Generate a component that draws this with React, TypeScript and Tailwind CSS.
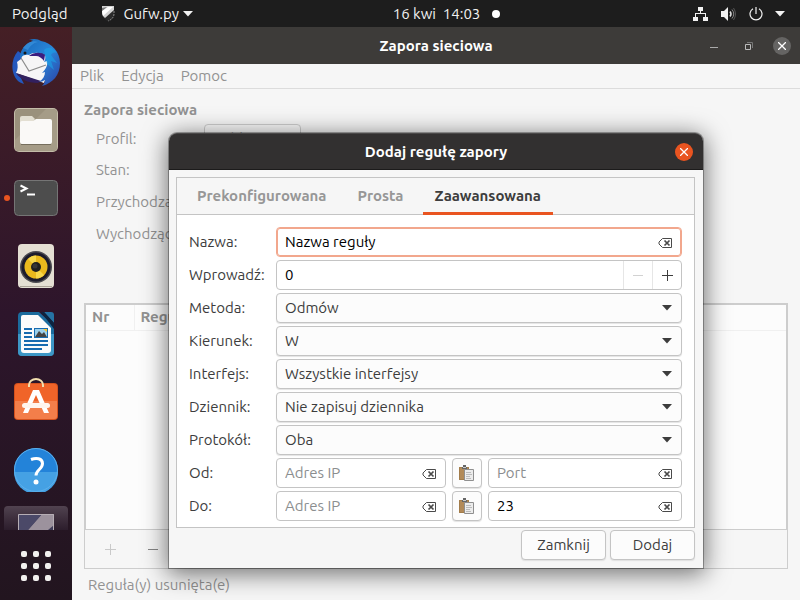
import React, { useState } from "react";

const caret = "M0 0h10l-5 5.5z";

function Caret({ className }: { className: string }) {
  return (
    <svg viewBox="0 0 10 6" className={className} fill="currentColor" aria-hidden="true">
      <path d={caret} />
    </svg>
  );
}

function ShieldIcon() {
  return (
    <svg viewBox="0 0 14 16" className="h-4 w-3.5" aria-hidden="true">
      <path d="M1 1h12v7c0 3-2 5.500-6 7-4-1.500-6-4-6-7z" fill="#2b2b2b" />
      <path d="M1 0h12v4L4 12C2 10 1 9 1 7z" fill="#d4d4d4" />
      <path d="M1 5 7 1h5L2 10z" fill="#fff" />
      <path d="m1 2 5-1-5 4z" fill="#777" />
      <path d="M13 5v3c0 3-2 5.500-6 7" fill="none" stroke="#8a8a8a" strokeWidth="1" strokeDasharray="2 1" />
    </svg>
  );
}

function TopBar() {
  return (
    <header className="flex h-[27px] shrink-0 items-center justify-between bg-[#1d1d1d] text-[#f2f2f2]">
      <div className="flex flex-1 items-center pl-3">
        <button>Podgląd</button>
        <button className="ml-8.5 flex items-center">
          <ShieldIcon />
          <span className="ml-2">Gufw.py</span>
          <Caret className="ml-1 h-1.5 w-2.5" />
        </button>
      </div>
      <button className="ml-24 flex items-center">
        <span>16 kwi&nbsp; 14:03</span>
        <span className="ml-3 size-2 rounded-full bg-white" />
      </button>
      <div className="flex flex-1 justify-end pr-[15px]">
        <button className="flex items-center gap-3" aria-label="Menu systemowe">
          <svg viewBox="0 0 16 14" className="h-3.5 w-4" fill="#f2f2f2">
            <path d="M5 0h5v4H8v2h5v4h2v4h-5v-4h2V7H3v3h2v4H0v-4h2V6h5V4H5z" />
          </svg>
          <svg viewBox="0 0 16 14" className="h-3.5 w-4" fill="none">
            <path d="M0 4h3l4-4v14l-4-4H0z" fill="#f2f2f2" />
            <path d="M9 4.500q2 2.500 0 5" stroke="#ddd" strokeWidth="1.500" />
            <path d="M11 2.500q3.500 4.500 0 9" stroke="#888" />
            <path d="M12.500 1q4 6 0 12" stroke="#555" />
          </svg>
          <svg viewBox="0 0 14 14" className="size-3.5" fill="none" stroke="#f2f2f2" strokeWidth="1.200">
            <path d="M4 1.700a6 6 0 1 0 6 0M7 0v7" />
          </svg>
          <Caret className="h-1.5 w-2.5" />
        </button>
      </div>
    </header>
  );
}

function ThunderbirdIcon() {
  return (
    <svg viewBox="0 0 48 48" className="size-12" aria-hidden="true">
      <defs>
        <linearGradient id="tb" x1="0" y1="0" x2="1" y2="1">
          <stop offset="0" stopColor="#1667b8" />
          <stop offset=".5" stopColor="#2a86d9" />
          <stop offset="1" stopColor="#2b3fa4" />
        </linearGradient>
      </defs>
      <path d="M6 13C-2 22-1 36 6 43c1 1 3 2 6 3l-3-6-3-6 5-17z" fill="#2458bd" />
      <path d="M4 35c2-4 2-7 1-11l4-3 2-5 14-2 13 5-2 8 1 4-5 14z" fill="#f6f5f6" />
      <path d="M9 20 17 33l17-6" fill="none" stroke="#8c8c8c" strokeWidth="1.200" />
      <path d="m4 35 25 8-3 2C15 45 8 41 4 35z" fill="#32205f" />
      <path d="M8 20c0-9 6-15 13-17-1-1-2-1-4-1 5-2 9-1 12 1 11 2 19 11 19 22 0 12-7 20-18 23 2-2 3-4 3-6-2 1-4 2-6 2 4-3 6-6 6-10l-3 1c4-4 6-8 5-12l-3 1c1-2 2-4 1-7-5-3-12-3-16 0-3-1-6 0-9 3z" fill="url(#tb)" />
      <path d="M32 12c4-4 10-2 13 3-3-1-5 0-6 2l6 8-6-2 3 9-7-6" fill="#1ba1e8" opacity=".6" />
      <path d="M17 18c5-4 12-4 16-1l-1 6c-2-3-5-5-8-5z" fill="#3a1d80" />
      <circle cx="13" cy="15" r="1.500" fill="#17191c" />
      <path d="M11 10c4-5 9-8 15-6-5 1-8 4-10 8" fill="#3b93dd" opacity=".7" />
    </svg>
  );
}

function FilesIcon() {
  return (
    <svg viewBox="0 0 44 44" className="size-11" aria-hidden="true">
      <rect width="44" height="44" rx="5" fill="#c4bda9" />
      <rect x="1" y="1" width="42" height="42" rx="4" fill="#9a917c" />
      <path d="M1 32 32 1h7a4 4 0 0 1 4 4v34a4 4 0 0 1-4 4H5a4 4 0 0 1-4-4z" fill="#a59c87" />
      <path d="M6 10q0-2 2-2h10l3 3-3 4H6z" fill="#e3dfd2" />
      <path d="M6 15q0-2 2-2h11l3-2h14q2 0 2 2v21q0 2-2 2H8q-2 0-2-2z" fill="#faf9f7" />
      <path d="M7 36.500h30" stroke="#756e5d" />
    </svg>
  );
}

function TerminalIcon() {
  return (
    <svg viewBox="0 0 44 36" className="h-9 w-11" aria-hidden="true">
      <rect x=".5" y=".5" width="43" height="35" rx="4" fill="#4d4d4d" stroke="#757575" />
      <path d="m6.500 5.500 6 3-6 3" fill="none" stroke="#fff" strokeWidth="2" />
      <path d="M13 14.500h8" stroke="#fff" strokeWidth="2" />
    </svg>
  );
}

function SpeakerIcon() {
  return (
    <svg viewBox="0 0 36 44" className="h-11 w-9" aria-hidden="true">
      <rect width="36" height="44" rx="4" fill="#e4dfd3" />
      <path d="M2 42.500h32" stroke="#aaa497" />
      <circle cx="18" cy="23" r="16" fill="#4b4a50" />
      <circle cx="18" cy="23" r="14.500" fill="#1c1b2b" />
      <circle cx="18" cy="23" r="11.500" fill="#eab91d" />
      <path d="M18 23 10 15a11.500 11.500 0 0 1 8-3.500zM18 23l8 8a11.500 11.500 0 0 1-8 3.500z" fill="#f7d84a" />
      <circle cx="18" cy="23" r="5" fill="#20201f" />
      <circle cx="17" cy="22" r="2.500" fill="#373737" />
    </svg>
  );
}

function WriterIcon() {
  return (
    <svg viewBox="0 0 36 44" className="h-11 w-9" aria-hidden="true">
      <path d="M4 0h17l15 14v26q0 4-4 4H4q-4 0-4-4V4q0-4 4-4z" fill="#1b6b9d" />
      <path d="M0 22h36v18q0 4-4 4H4q-4 0-4-4z" fill="#3d97c6" />
      <path d="M26 0h7q3 0 3 3v8z" fill="#2673a4" />
      <path d="M23 0h3l10 11v6z" fill="#0d2440" />
      <path d="M5 3h15l13 13v22q0 3-3 3H6q-3 0-3-3V5q0-2 2-2z" fill="#fbfbfb" />
      <path d="M6 17h8M6 21h8M6 25h8M6 29h24M6 33h24M6 37h18" stroke="#176bb0" strokeWidth="2" />
      <path d="M16 16h14v10H16z" fill="#176bb0" />
      <path d="M17 17h12v8H17z" fill="#9bd0ec" />
      <path d="m17 25 4-6 3 3 2-2 3 5z" fill="#444" />
      <path d="M25 17h4v3z" fill="#f6c52e" />
    </svg>
  );
}

function SoftwareIcon() {
  return (
    <svg viewBox="0 0 44 42" className="mb-1.5 h-[42px] w-11" aria-hidden="true">
      <rect y="5" width="44" height="37" rx="4" fill="#d4511d" />
      <rect x="1" y="6" width="42" height="35" rx="3" fill="#f06429" />
      <path d="M1 23h42v15q0 3-3 3H4q-3 0-3-3z" fill="#f37e4a" />
      <path d="M15 9V7a7 6 0 0 1 14 0v2" fill="none" stroke="#f1dfae" strokeWidth="2" />
      <path d="M19 12h6l10 23h-5l-8-18-8 18H9z" fill="#fff" />
      <rect x="8" y="25" width="28" height="5" rx="2.500" fill="#fff5ee" />
    </svg>
  );
}

function HelpIcon() {
  return (
    <svg viewBox="0 0 44 44" className="size-11" aria-hidden="true">
      <circle cx="22" cy="22" r="22" fill="#2383d9" />
      <path d="M0 24h44a22 22 0 0 1-44 0z" fill="#45a1e4" />
      <circle cx="22" cy="22" r="21.500" fill="none" stroke="#5cb0ec" />
      <path d="M17 11.500c5-2 11.500-1.500 11.500 4 0 6-6.500 6-6.500 12" fill="none" stroke="#fff" strokeWidth="3" />
      <circle cx="22" cy="34" r="2.500" fill="#fff" />
    </svg>
  );
}

const dockApps = [
  { name: "Thunderbird", icon: <ThunderbirdIcon />, running: false },
  { name: "Pliki", icon: <FilesIcon />, running: false },
  { name: "Terminal", icon: <TerminalIcon />, running: true },
  { name: "Rhythmbox", icon: <SpeakerIcon />, running: false },
  { name: "LibreOffice Writer", icon: <WriterIcon />, running: false },
  { name: "Ubuntu Software", icon: <SoftwareIcon />, running: false },
  { name: "Pomoc", icon: <HelpIcon />, running: false },
];

function Dock() {
  return (
    <nav className="flex w-[72px] shrink-0 flex-col overflow-hidden bg-linear-to-b from-[#451f25] via-[#2d152b] via-50% to-[#22151f] pt-px">
      {dockApps.map((app) => (
        <button key={app.name} aria-label={app.name} className="relative flex h-[68px] shrink-0 items-center justify-center">
          {app.running && <span className="absolute left-1 size-1.5 rounded-full bg-[#e95420]" />}
          {app.icon}
        </button>
      ))}
      <button aria-label="Zapora sieciowa" className="mx-1 mt-0.5 flex h-6 shrink-0 items-end justify-center overflow-hidden rounded-t bg-linear-to-b from-[#514350] to-[#2c1d2c]">
        <svg viewBox="0 0 36 16" className="h-4 w-9">
          <path d="M0 0h36v16H0z" fill="#403c58" />
          <path d="M24 0h12v11l-6 5H10z" fill="#9c929d" />
          <path d="M0 0h24L10 16H0z" fill="#4b4968" />
          <path d="M.5 16V.5h35V16" fill="none" stroke="#b6aeb5" />
        </svg>
      </button>
      <button aria-label="Wyświetl programy" className="mt-auto mb-[19px] grid shrink-0 grid-cols-3 gap-1.5 self-center">
        {Array.from({ length: 9 }, (_, i) => (
          <span key={i} className="size-1.5 rounded-xs bg-[#f2f0ef]" />
        ))}
      </button>
    </nav>
  );
}

function CloseIcon() {
  return (
    <svg viewBox="0 0 8 8" className="size-2" fill="none" stroke="#fff" strokeWidth="1.300">
      <path d="m0 0 8 8M8 0 0 8" />
    </svg>
  );
}

function FirewallWindow() {
  return (
    <section className="flex flex-1 flex-col bg-[#f6f6f6] text-[#929292]">
      <div className="flex h-[37px] shrink-0 items-center bg-[#3d3b39] px-[9px]">
        <div className="flex-1" />
        <h1 className="font-bold text-white">Zapora sieciowa</h1>
        <div className="flex flex-1 items-center justify-end gap-5">
          <button aria-label="Minimalizuj" className="mt-1 mr-1.5 h-px w-2 bg-[#aaa]" />
          <button aria-label="Przywróć">
            <svg viewBox="0 0 9 9" className="size-[9px]" fill="none">
              <path d="M1.500 3.500h5v5h-5z" stroke="#bbb" />
              <path d="M3 1.500h5.500V7" stroke="#777" />
            </svg>
          </button>
          <button aria-label="Zamknij okno" className="flex size-[18px] items-center justify-center rounded-full bg-[#656463]">
            <CloseIcon />
          </button>
        </div>
      </div>
      <nav className="flex h-[25px] shrink-0 items-center gap-[17px] border-b border-[#dcdcdc] px-2">
        <button>Plik</button>
        <button>Edycja</button>
        <button>Pomoc</button>
      </nav>
      <main className="flex flex-1 flex-col px-3 pt-[11px]">
        <h2 className="font-bold">Zapora sieciowa</h2>
        <div className="mt-1 grid grid-cols-[96px_97px] items-center gap-x-3 pl-3">
          <label htmlFor="profile">Profil:</label>
          <select id="profile" className="h-[30px] appearance-none rounded border border-[#cdcdcd] bg-[#fafafa] px-2">
            <option>Publiczny</option>
          </select>
          <span className="col-span-2 flex h-8 items-center">Stan:</span>
          <span className="col-span-2 flex h-8 items-center">Przychodzące:</span>
          <span className="col-span-2 flex h-8 items-center">Wychodzące:</span>
        </div>
        <div className="mt-[53px] flex flex-1 flex-col border border-[#cdcdcd]">
          <div className="flex-1 border border-[#cdcdcd] bg-[#fcfcfc]">
            <table className="w-full table-fixed text-left">
              <thead>
                <tr className="h-[25px] border-b border-[#f0f0f0]">
                  <th className="w-12 border-r border-[#f0f0f0] pl-1.5">Nr</th>
                  <th className="w-[280px] pl-1.5">Reguła</th>
                  <th className="pl-1.5">Nazwa</th>
                </tr>
              </thead>
            </table>
          </div>
          <div className="flex h-[38px] shrink-0 items-center gap-8 pl-5">
            <button aria-label="Dodaj regułę" className="text-[#c9c9c9]">
              <PlusIcon />
            </button>
            <button aria-label="Usuń regułę" className="h-px w-2.5 bg-[#858585]" />
          </div>
        </div>
        <p className="flex h-[31px] shrink-0 items-center pl-1">Reguła(y) usunięta(e)</p>
      </main>
    </section>
  );
}

function PlusIcon() {
  return (
    <svg viewBox="0 0 11 11" className="size-[11px]" stroke="currentColor">
      <path d="M0 5.500h11M5.500 0v11" />
    </svg>
  );
}

const fieldBox = "flex h-[30px] min-w-0 items-center rounded border bg-white";

function ClearField({ id, label, placeholder, initial = "", focused = false, className = "" }: {
  id: string; label?: string; placeholder?: string; initial?: string; focused?: boolean; className?: string;
}) {
  const [value, setValue] = useState(initial);
  return (
    <div className={`${fieldBox} ${focused ? "border-[#f2a78d] ring-1 ring-[#f2a78d] ring-inset" : "border-[#c4c4c4]"} ${className}`}>
      <input
        id={id}
        aria-label={label}
        placeholder={placeholder}
        value={value}
        onChange={(e) => setValue(e.target.value)}
        className="w-0 min-w-0 flex-1 bg-transparent pl-2 text-black outline-none placeholder:text-[#8b8e8f]"
      />
      <button type="button" aria-label="Wyczyść" onClick={() => setValue("")} className="mt-0.5 mr-[9px]">
        <svg viewBox="0 0 14 10" className="h-2.5 w-3.5" fill="none">
          <path d="M4.500 .5h9v9h-9L1 6V4z" stroke="#4a4a4a" />
          <path d="m6.500 2.500 5 5M11.500 2.500l-5 5" stroke="#4a4a4a" strokeWidth="1.700" />
        </svg>
      </button>
    </div>
  );
}

function SelectRow({ id, label, value }: { id: string; label: string; value: string }) {
  return (
    <>
      <label htmlFor={id}>{label}</label>
      <div className="relative flex items-center">
        <select id={id} className="h-[30px] w-full appearance-none rounded border border-[#c4c4c4] bg-[#fcfcfc] px-2 shadow-[0_1px_1px_#e4e4e4]">
          <option>{value}</option>
        </select>
        <Caret className="pointer-events-none absolute right-2.5 h-1.5 w-2.5" />
      </div>
    </>
  );
}

function PasteButton() {
  return (
    <button type="button" aria-label="Wklej bieżący adres IP" className="flex h-[30px] w-[30px] shrink-0 items-center justify-center rounded border border-[#c4c4c4] bg-[#fcfcfc] shadow-[0_1px_1px_#e4e4e4]">
      <svg viewBox="0 0 16 17" className="h-[17px] w-4">
        <path d="M0 2h10v13H0z" fill="#b28a58" />
        <path d="M.5 2.500h9v12h-9z" fill="none" stroke="#a27c4a" />
        <path d="M3 4V2h1V0h3v2h1v2z" fill="#666" />
        <path d="M4 2h3v1H4z" fill="#ccc" />
        <path d="M5.500 4.500h9v11h-9z" fill="#ececec" stroke="#8f8f8f" />
        <path d="M7 7.500h5M7 9.500h6M7 11.500h4M7 13.500h5" stroke="#bbb" />
      </svg>
    </button>
  );
}

function AddressRow({ id, label, port = "" }: { id: string; label: string; port?: string }) {
  return (
    <>
      <label htmlFor={id}>{label}</label>
      <div className="flex gap-1.5">
        <ClearField id={id} placeholder="Adres IP" className="w-[170px]" />
        <PasteButton />
        <ClearField id={`${id}-port`} label={`${label} port`} placeholder="Port" initial={port} className="flex-1" />
      </div>
    </>
  );
}

const actionButton =
  "h-[30px] w-[85px] rounded border border-[#c4c4c4] bg-[#fcfcfc] shadow-[0_1px_1px_#e0e0e0]";

function RuleDialog() {
  return (
    <div role="dialog" aria-labelledby="dialog-title" className="flex w-[534px] flex-col rounded-t-lg bg-[#f6f6f6] text-[#3d3d3d] shadow-[0_0_0_1px_rgba(0,0,0,0.3),0_4px_24px_2px_rgba(0,0,0,0.55)]">
      <div className="flex h-[37px] items-center rounded-t-lg border-t border-b border-t-[#4a4848] border-b-[#1c1b1b] bg-[#323030] px-2.5">
        <div className="flex-1" />
        <h2 id="dialog-title" className="font-bold text-white">Dodaj regułę zapory</h2>
        <div className="flex flex-1 justify-end">
          <button aria-label="Zamknij okno dialogowe" className="flex size-[18px] items-center justify-center rounded-full bg-[#e95420]">
            <CloseIcon />
          </button>
        </div>
      </div>
      <div className="mt-[7px] mr-2 ml-[7px] border border-[#c4c4c4] bg-white">
        <div role="tablist" className="flex h-[37px] gap-[7px] border-b border-[#c4c4c4] bg-[#f6f6f6] pl-2 font-bold text-[#979797]">
          <button role="tab" className="px-3">Prekonfigurowana</button>
          <button role="tab" className="px-3">Prosta</button>
          <button role="tab" aria-selected="true" className="-mb-px border-b-3 border-[#e95420] px-3 pt-0.5 text-[#3d3d3d]">
            Zaawansowana
          </button>
        </div>
        <form className="grid grid-cols-[84px_1fr] items-center gap-x-[3px] gap-y-[3px] px-3 pt-3 pb-1.5" onSubmit={(e) => e.preventDefault()}>
          <label htmlFor="name">Nazwa:</label>
          <ClearField id="name" initial="Nazwa reguły" focused />
          <label htmlFor="insert">Wprowadź:</label>
          <div className={`${fieldBox} border-[#c4c4c4]`}>
            <input id="insert" defaultValue="0" className="w-0 min-w-0 flex-1 bg-transparent pl-2 text-black outline-none" />
            <button type="button" aria-label="Zmniejsz" className="flex h-7 w-[29px] items-center justify-center border-l border-[#e6e6e6]">
              <span className="h-px w-2.5 bg-[#d2d2d2]" />
            </button>
            <button type="button" aria-label="Zwiększ" className="flex h-7 w-[29px] items-center justify-center border-l border-[#e6e6e6]">
              <PlusIcon />
            </button>
          </div>
          <SelectRow id="policy" label="Metoda:" value="Odmów" />
          <SelectRow id="direction" label="Kierunek:" value="W" />
          <SelectRow id="interface" label="Interfejs:" value="Wszystkie interfejsy" />
          <SelectRow id="log" label="Dziennik:" value="Nie zapisuj dziennika" />
          <SelectRow id="protocol" label="Protokół:" value="Oba" />
          <AddressRow id="from" label="Od:" />
          <AddressRow id="to" label="Do:" port="23" />
        </form>
      </div>
      <div className="flex justify-end gap-1 pt-0.5 pr-2 pb-2">
        <button className={actionButton}>Zamknij</button>
        <button className={actionButton}>Dodaj</button>
      </div>
    </div>
  );
}

export default function App() {
  return (
    <div className="flex h-screen flex-col overflow-hidden font-['Ubuntu','Noto_Sans',sans-serif] text-[15px] leading-5">
      <TopBar />
      <div className="flex min-h-0 flex-1">
        <Dock />
        <div className="relative flex min-w-0 flex-1">
          <FirewallWindow />
          <div className="absolute inset-x-0 top-[106px] flex justify-center">
            <RuleDialog />
          </div>
        </div>
      </div>
    </div>
  );
}
